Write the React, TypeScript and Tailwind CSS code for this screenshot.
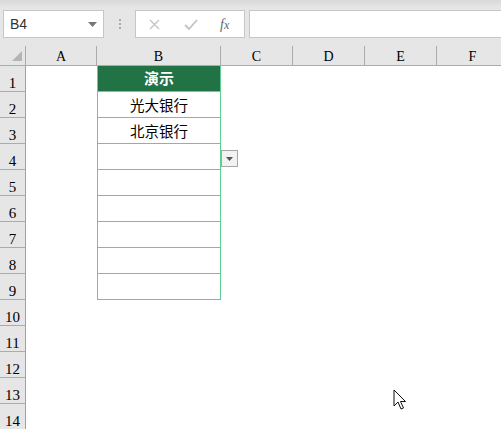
import React from "react";

const cols = [
  { k: "A", w: "w-[71px]" },
  { k: "B", w: "w-[124px]" },
  { k: "C", w: "w-[72px]" },
  { k: "D", w: "w-[72px]" },
  { k: "E", w: "w-[72px]" },
  { k: "F", w: "w-[72px]" },
];

const data: Record<number, string> = { 2: "光大银行", 3: "北京银行" };

const hdrFont = { fontFamily: '"Liberation Serif", "Noto Sans CJK SC", serif' };
const cjk = { fontFamily: '"Noto Sans CJK SC", sans-serif' };

export default function App() {
  const rows = Array.from({ length: 14 }, (_, i) => i + 1);
  return (
    <div className="relative w-[501px] h-[429px] overflow-hidden bg-white">
      {/* toolbar */}
      <div className="h-[46px] bg-[linear-gradient(#d9d9d9,#e6e6e6_8px,#e6e6e6)] flex items-start pt-[10px] pl-[3px]">
        <div className="w-[101px] h-[28px] bg-white border border-[#c6c6c6] flex items-center justify-between pl-[6px] pr-[6px]">
          <span className="text-[14px] text-[#333]" style={{ fontFamily: '"Liberation Sans", Arial, sans-serif' }}>B4</span>
          <svg width="9" height="5" viewBox="0 0 9 5"><path d="M0 0H9L4.5 5Z" fill="#777" /></svg>
        </div>
        <div className="w-[31px] h-[28px] flex flex-col items-center justify-center gap-[2px]">
          <div className="w-[2px] h-[2px] bg-[#aaa]" />
          <div className="w-[2px] h-[2px] bg-[#aaa]" />
          <div className="w-[2px] h-[2px] bg-[#aaa]" />
        </div>
        <div className="w-[110px] h-[28px] bg-white border border-[#c6c6c6] flex items-center">
          <svg className="ml-[13px]" width="11" height="11" viewBox="0 0 11 11"><path d="M1 1L10 10M10 1L1 10" stroke="#c3c3c3" strokeWidth="1.3" /></svg>
          <svg className="ml-[24px]" width="14" height="11" viewBox="0 0 14 11"><path d="M1 6L5 10L13 1" stroke="#c3c3c3" strokeWidth="1.8" fill="none" /></svg>
          <span className="ml-[22px] text-[14px] italic text-[#666]" style={{ fontFamily: '"Liberation Serif", serif' }}>f<span className="text-[12px]">x</span></span>
        </div>
        <div className="ml-[4px] flex-1 h-[28px] bg-white border-y border-l border-[#c6c6c6]" />
      </div>

      {/* column header */}
      <div className="flex h-[20px] bg-[#e6e6e6] border-b border-[#ababab]" style={hdrFont}>
        <div className="w-[26px] shrink-0 relative border-r border-[#ababab]">
          <svg className="absolute left-[12px] top-[5px]" width="10" height="10" viewBox="0 0 10 10"><path d="M10 0V10H0Z" fill="#b4b4b4" /></svg>
        </div>
        {cols.map((c) => (
          <div
            key={c.k}
            className={`${c.w} flex items-center justify-center pt-[2px] text-[14px] text-black border-r border-[#ababab] shrink-0`}
          >
            {c.k}
          </div>
        ))}
      </div>

      {/* rows */}
      {rows.map((r) => (
        <div key={r} className="flex h-[26px]">
          <div
            className="w-[26px] shrink-0 bg-[#e6e6e6] border-r border-[#a0a0a0] border-b border-b-[#ababab] flex items-end justify-center text-[15px] text-black leading-none"
            style={hdrFont}
          >
            <span>{r}</span>
          </div>
          <div className="w-[71px] shrink-0" />
          {r <= 9 ? (
            <div
              className={`w-[124px] shrink-0 border-x border-b border-[#5fcf8f] flex items-center justify-center ${
                r === 1 ? "bg-[#217346] text-white font-bold text-[15px]" : "text-black text-[14.5px]"
              }`}
              style={cjk}
            >
              {r === 1 ? "演示" : data[r] ?? ""}
            </div>
          ) : (
            <div className="w-[124px] shrink-0" />
          )}
          <div className="relative w-[72px] shrink-0">
            {r === 4 && (
              <div className="absolute left-0 top-[6px] w-[17px] h-[17px] bg-[#f2f2f2] border border-[#a6a6a6] flex items-center justify-center">
                <svg width="7" height="4" viewBox="0 0 7 4"><path d="M0 0H7L3.5 4Z" fill="#555" /></svg>
              </div>
            )}
          </div>
        </div>
      ))}

      {/* mouse cursor */}
      <svg className="absolute left-[393px] top-[389px]" width="14" height="22" viewBox="0 0 14 22">
        <path d="M1 1V17L5 13L8 20L10.5 19L7.5 12.5H12.5Z" fill="#fff" stroke="#111" strokeWidth="1" strokeLinejoin="round" />
      </svg>
    </div>
  );
}
